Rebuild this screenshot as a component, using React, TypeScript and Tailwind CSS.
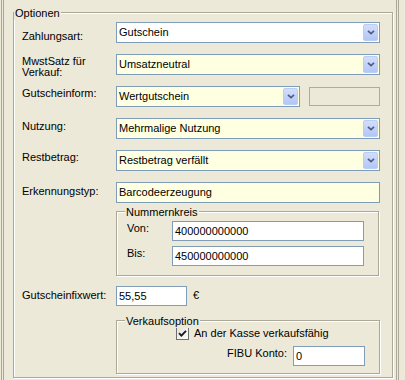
import React from "react"

function DropButton() {
  return (
    <div className="my-[1px] mr-[1px] flex w-[15px] shrink-0 items-center justify-center rounded-[2px] border border-[#bccdf5] bg-gradient-to-b from-[#d3defc] to-[#b2c6f6]">
      <svg width="8" height="5" viewBox="0 0 8 5">
        <path d="M1 0.8 L4 3.6 L7 0.8" fill="none" stroke="#4d6185" strokeWidth="1.8" />
      </svg>
    </div>
  )
}

function Combo({ value, width, yellow }: { value: string; width: string; yellow?: boolean }) {
  return (
    <div className={`flex h-[21px] border border-[#7f9db9] ${yellow ? "bg-[#ffffe1]" : "bg-white"} ${width}`}>
      <div className="flex flex-1 items-center pl-[2px]">{value}</div>
      <DropButton />
    </div>
  )
}

function TextBox({ value, className }: { value: string; className: string }) {
  return (
    <div className={`flex items-center border border-[#7f9db9] pl-[2px] ${className}`}>{value}</div>
  )
}

function Group({
  title,
  titleLeft,
  className,
  children,
}: {
  title: string
  titleLeft: string
  className: string
  children?: React.ReactNode
}) {
  return (
    <div className={`relative border border-[#aca899] shadow-[inset_1px_1px_0_#fff,1px_1px_0_#fff] ${className}`}>
      <span className={`absolute top-[-6px] bg-[#ece9d8] px-[1px] ${titleLeft}`}>{title}</span>
      {children}
    </div>
  )
}

export default function App() {
  const rows = [
    { label: "Zahlungsart:", mt: "mt-[8px]", control: <Combo value="Gutschein" width="w-[264px]" /> },
    {
      label: (
        <span className="block leading-[11px]">
          MwstSatz für
          <br />
          Verkauf:
        </span>
      ),
      mt: "mt-[2px]",
      control: <Combo value="Umsatzneutral" width="w-[264px]" yellow />,
    },
    {
      label: "Gutscheinform:",
      mt: "mt-[1px]",
      control: (
        <div className="flex gap-[9px]">
          <Combo value="Wertgutschein" width="w-[184px]" yellow />
          <div className="mt-[1px] h-[19px] w-[71px] border border-[#a5acb2]" />
        </div>
      ),
    },
    { label: "Nutzung:", mt: "mt-[2px]", control: <Combo value="Mehrmalige Nutzung" width="w-[264px]" yellow /> },
    { label: "Restbetrag:", mt: "mt-[1px]", control: <Combo value="Restbetrag verfällt" width="w-[264px]" yellow /> },
    {
      label: "Erkennungstyp:",
      mt: "mt-[3px]",
      control: <TextBox value="Barcodeerzeugung" className="h-[21px] w-[264px] bg-[#ffffe1]" />,
    },
  ]

  return (
    <div className="h-[380px] w-[405px] overflow-hidden bg-[#ece9d8] font-['Liberation_Sans',Arial,sans-serif] text-[11px] leading-[13px] text-black">
      <div className="ml-[1px] h-full w-[398px] border-x-[3px] border-double border-[#aca899]">
        <div className="pl-[9px] pt-[12px]">
          <Group title="Optionen" titleLeft="left-0" className="h-[366px] w-[380px]">
            <div className="flex flex-col gap-[11px] pl-[8px] pt-[9px]">
              {rows.map((row, i) => (
                <div key={i} className="flex h-[21px] items-start">
                  <div className={`w-[94px] shrink-0 ${row.mt}`}>{row.label}</div>
                  {row.control}
                </div>
              ))}
            </div>

            <div className="ml-[102px] mt-[8px]">
              <Group title="Nummernkreis" titleLeft="left-[8px]" className="h-[65px] w-[263px]">
                <div className="flex flex-col gap-[5px] pl-[10px] pt-[9px]">
                  <div className="flex h-[20px] items-start">
                    <div className="mt-[1px] w-[45px] shrink-0">Von:</div>
                    <TextBox value="400000000000" className="h-[20px] w-[192px] bg-white" />
                  </div>
                  <div className="flex h-[20px] items-start">
                    <div className="mt-[1px] w-[45px] shrink-0">Bis:</div>
                    <TextBox value="450000000000" className="h-[20px] w-[192px] bg-white" />
                  </div>
                </div>
              </Group>
            </div>

            <div className="mt-[10px] flex h-[20px] items-start pl-[8px]">
              <div className="mt-[3px] w-[94px] shrink-0">Gutscheinfixwert:</div>
              <TextBox value="55,55" className="h-[20px] w-[71px] bg-white" />
              <span className="ml-[6px] mt-[3px]">€</span>
            </div>

            <div className="ml-[102px] mt-[14px]">
              <Group title="Verkaufsoption" titleLeft="left-[8px]" className="h-[54px] w-[264px]">
                <div className="mt-[6px] flex h-[13px] items-center gap-[5px] pl-[59px]">
                  <div className="flex h-[13px] w-[13px] items-center justify-center border border-[#6f6f6f] bg-gradient-to-br from-[#e2e1da] to-white">
                    <svg width="9" height="9" viewBox="0 0 9 9">
                      <path d="M1 4.2 L3.4 6.6 L8 1.8" fill="none" stroke="#1a1a1a" strokeWidth="1.8" />
                    </svg>
                  </div>
                  <span>An der Kasse verkaufsfähig</span>
                </div>
                <div className="mt-[6px] flex h-[20px] items-start justify-end pr-[14px]">
                  <span className="mr-[6px] mt-[1px]">FIBU Konto:</span>
                  <TextBox value="0" className="h-[20px] w-[72px] bg-white" />
                </div>
              </Group>
            </div>
          </Group>
        </div>
      </div>
    </div>
  )
}
